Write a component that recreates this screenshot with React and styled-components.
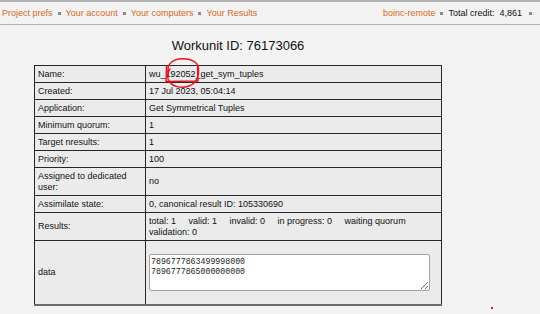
import styled, { createGlobalStyle } from "styled-components"

const GlobalStyle = createGlobalStyle`
    html, body {
        margin: 0;
        padding: 0;
        background: #f3f3f3;
        font-family: "Liberation Sans", Arial, sans-serif;
    }
`;

const Page = styled.div`
    position: relative;
    width: 540px;
    height: 314px;
    overflow: hidden;
`;

const TopBar = styled.div`
    display: flex;
    justify-content: space-between;
    align-items: center;
    height: 22px;
    padding: 0 1px 0 2px;
    border-top: 2px solid #b4b4b4;
    border-bottom: 1px solid #b4b4b4;
    font-size: 9px;
`;

const NavGroup = styled.div`
    display: flex;
    align-items: center;
    white-space: nowrap;
`;

const NavLink = styled.a`
    color: #d8691a;
    text-decoration: none;
`;

const Plain = styled.span`
    color: #111;
`;

const Dot = styled.span`
    display: inline-block;
    width: 3px;
    height: 3px;
    background: #8c8c8c;
    margin: 0 ${p => p.$gap || 5}px;
`;

const Content = styled.div`
    width: 476px;
`;

const Title = styled.h1`
    margin: 0;
    padding-top: 13px;
    height: 27px;
    text-align: center;
    font-size: 13px;
    font-weight: normal;
    color: #111;
`;

const Table = styled.table`
    margin: 0 auto;
    width: 408px;
    border-collapse: collapse;
    border: 1px solid #3a3a3a;
    border-bottom: 2px solid #6a6a6a;
    font-size: 9px;
    color: #111;
`;

const Cell = styled.td`
    border: 1px solid #262626;
    background: #ebebeb;
    padding: ${p => (p.$tall ? "13px 3px" : "2.5px 3px")};
    line-height: 11px;
    vertical-align: middle;
    width: ${p => p.$w || "auto"};
`;

const Marked = styled.span`
    position: relative;
`;

const Scribble = styled.svg`
    position: absolute;
    left: -4px;
    top: -12px;
    overflow: visible;
    pointer-events: none;
`;

const DataBox = styled.textarea`
    display: block;
    box-sizing: border-box;
    width: 281px;
    height: 37px;
    margin: 0;
    padding: 2px 1px;
    border: 1px solid #a4a4a4;
    border-radius: 2px;
    background: #fff;
    font-family: "Liberation Mono", "Courier New", monospace;
    font-size: 8.25px;
    line-height: 9.5px;
    color: #222;
`;

const StrayDot = styled.span`
    position: absolute;
    left: 491px;
    top: 307px;
    width: 2px;
    height: 2px;
    background: #e8101b;
`;

const rows = [
  ["Created:", "17 Jul 2023, 05:04:14"],
  ["Application:", "Get Symmetrical Tuples"],
  ["Minimum quorum:", "1"],
  ["Target nresults:", "1"],
  ["Priority:", "100"],
  ["Assigned to dedicated user:", "no"],
  ["Assimilate state:", "0, canonical result ID: 105330690"],
]

// BOINC pads the counts with a run of non-breaking spaces
const gap = " \u00a0\u00a0\u00a0 "
const results = ["total: 1", "valid: 1", "invalid: 0", "in progress: 0", "waiting quorum validation: 0"].join(gap)

const App = () => {
  return (
    <Page>
      <GlobalStyle />
      <TopBar>
        <NavGroup>
          <NavLink href="#">Project prefs</NavLink>
          <Dot />
          <NavLink href="#">Your account</NavLink>
          <Dot />
          <NavLink href="#">Your computers</NavLink>
          <Dot />
          <NavLink href="#">Your Results</NavLink>
        </NavGroup>
        <NavGroup>
          <NavLink href="#">boinc-remote</NavLink>
          <Dot />
          <Plain>Total credit:&nbsp; 4,861</Plain>
          <Dot $gap={7} />
        </NavGroup>
      </TopBar>
      <Content>
        <Title>Workunit ID: 76173066</Title>
        <Table>
          <tbody>
            <tr>
              <Cell $w="104px">Name:</Cell>
              <Cell>
                wu_<Marked>192052
                  <Scribble width="40" height="34" viewBox="0 0 40 34">
                    <g fill="none" stroke="#e8121b" strokeWidth="1.4" strokeLinecap="round">
                      <path d="M4.5 9.5 L4 24.5 L36 24 L35.5 10" />
                      <path d="M6 14 C5 6 12 2 20 1.8 C29 1.5 36 5 36.5 11 C37.5 18 35 26 27 29 C20 31.5 11 30 7.5 25 C5 21 5 16 8 12" />
                    </g>
                  </Scribble>
                </Marked>_get_sym_tuples
              </Cell>
            </tr>
            {rows.map(([k, v]) => (
              <tr key={k}>
                <Cell>{k}</Cell>
                <Cell>{v}</Cell>
              </tr>
            ))}
            <tr>
              <Cell>Results:</Cell>
              <Cell>{results}</Cell>
            </tr>
            <tr>
              <Cell>data</Cell>
              <Cell $tall>
                <DataBox readOnly defaultValue={"7896777863499998000\n7896777865000000000"} />
              </Cell>
            </tr>
          </tbody>
        </Table>
      </Content>
      <StrayDot />
    </Page>
  )
}

export default App
